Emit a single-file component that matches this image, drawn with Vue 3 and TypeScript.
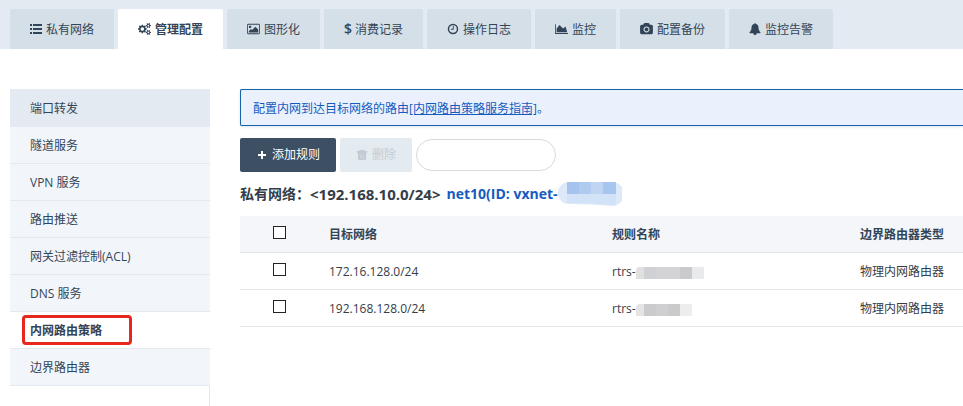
<script setup lang="ts">
import { ref, computed } from 'vue'

interface Tab {
  label: string
  icon: string
}

interface Rule {
  id: number
  target: string
  type: string
  mask: { width: number; blocks: { x: number; w: number; fill: string }[] }
}

const tabs: Tab[] = [
  { label: '私有网络', icon: 'list' },
  { label: '管理配置', icon: 'cogs' },
  { label: '图形化', icon: 'image' },
  { label: '消费记录', icon: 'dollar' },
  { label: '操作日志', icon: 'clock' },
  { label: '监控', icon: 'chart' },
  { label: '配置备份', icon: 'camera' },
  { label: '监控告警', icon: 'bell' },
]
const activeTab = ref(1)

const menu = ['端口转发', '隧道服务', 'VPN 服务', '路由推送', '网关过滤控制(ACL)', 'DNS 服务', '内网路由策略', '边界路由器']
const activeMenu = ref(6)

const rules: Rule[] = [
  {
    id: 1,
    target: '172.16.128.0/24',
    type: '物理内网路由器',
    mask: {
      width: 68,
      blocks: [
        { x: 0, w: 8, fill: '#e0e0e1' },
        { x: 8, w: 12, fill: '#d0d1d4' },
        { x: 20, w: 24, fill: '#d4d4d6' },
        { x: 44, w: 12, fill: '#cacacc' },
        { x: 56, w: 12, fill: '#e9eaec' },
      ],
    },
  },
  {
    id: 2,
    target: '192.168.128.0/24',
    type: '物理内网路由器',
    mask: {
      width: 56,
      blocks: [
        { x: 0, w: 8, fill: '#e4e4e5' },
        { x: 8, w: 12, fill: '#cbcbcd' },
        { x: 20, w: 12, fill: '#cfcfd1' },
        { x: 32, w: 12, fill: '#cacacc' },
        { x: 44, w: 12, fill: '#ededee' },
      ],
    },
  },
]

const selected = ref<number[]>([])
const keyword = ref('')
const allSelected = computed({
  get: () => selected.value.length === rules.length,
  set: (on: boolean) => {
    selected.value = on ? rules.map((r) => r.id) : []
  },
})
</script>

<template>
  <div class="page">
    <nav class="tabs">
      <button
        v-for="(tab, i) in tabs"
        :key="tab.label"
        type="button"
        class="tab"
        :class="{ active: i === activeTab }"
        @click="activeTab = i"
      >
        <svg v-if="tab.icon === 'list'" class="icon" viewBox="0 0 12 12" aria-hidden="true">
          <path d="M0 1h2v2H0zM3 1h9v2H3zM0 5h2v2H0zM3 5h9v2H3zM0 9h2v2H0zM3 9h9v2H3z" />
        </svg>
        <svg v-else-if="tab.icon === 'cogs'" class="icon wide" viewBox="0 0 1920 1792" aria-hidden="true">
          <path
            d="M896 896q0-106-75-181t-181-75-181 75-75 181 75 181 181 75 181-75 75-181zm768 512q0-52-38-90t-90-38-90 38-38 90q0 53 37.5 90.5t90.5 37.5 90.5-37.5 37.5-90.5zm0-1024q0-52-38-90t-90-38-90 38-38 90q0 53 37.5 90.5t90.5 37.5 90.5-37.5 37.5-90.5zm-384 421v185q0 10-7 19.5t-16 10.5l-155 24q-11 35-32 76 34 48 90 115 7 11 7 20 0 12-7 19-23 30-82.5 89.5t-78.5 59.5q-11 0-21-7l-115-90q-37 19-77 31-11 108-23 155-7 24-30 24h-186q-11 0-20-7.5t-10-17.5l-23-153q-34-10-75-31l-118 89q-7 7-20 7-11 0-21-8-144-133-144-160 0-9 7-19 10-14 41-53t47-61q-23-44-35-82l-152-24q-10-1-17-9.5t-7-19.5v-185q0-10 7-19.5t16-10.5l155-24q11-35 32-76-34-48-90-115-7-11-7-20 0-12 7-20 22-30 82-89t79-59q11 0 21 7l115 90q34-18 77-32 11-108 23-154 7-24 30-24h186q11 0 20 7.5t10 17.5l23 153q34 10 75 31l118-89q8-7 20-7 11 0 21 8 144 133 144 160 0 8-7 19-12 16-42 54t-45 60q23 48 34 82l152 23q10 2 17 10.5t7 19.5zm640 533v140q0 16-149 31-12 27-30 52 51 113 51 138 0 4-4 7-122 71-124 71-8 0-46-47t-52-68q-20 2-30 2t-30-2q-14 21-52 68t-46 47q-2 0-124-71-4-3-4-7 0-25 51-138-18-25-30-52-149-15-149-31v-140q0-16 149-31 13-29 30-52-51-113-51-138 0-4 4-7 4-2 35-20t59-34 30-16q8 0 46 46.5t52 67.5q20-2 30-2t30 2q51-71 92-112l6-2q4 0 124 70 4 3 4 7 0 25-51 138 17 23 30 52 149 15 149 31zm0-1024v140q0 16-149 31-12 27-30 52 51 113 51 138 0 4-4 7-122 71-124 71-8 0-46-47t-52-68q-20 2-30 2t-30-2q-14 21-52 68t-46 47q-2 0-124-71-4-3-4-7 0-25 51-138-18-25-30-52-149-15-149-31v-140q0-16 149-31 13-29 30-52-51-113-51-138 0-4 4-7 4-2 35-20t59-34 30-16q8 0 46 46.5t52 67.5q20-2 30-2t30 2q51-71 92-112l6-2q4 0 124 70 4 3 4 7 0 25-51 138 17 23 30 52 149 15 149 31z"
          />
        </svg>
        <svg v-else-if="tab.icon === 'image'" class="icon wide" viewBox="-64 0 1920 1792" aria-hidden="true">
          <path
            d="M576 576q0 80-56 136t-136 56-136-56-56-136 56-136 136-56 136 56 56 136zm1024 384v448h-1408v-192l320-320 160 160 512-512zm96-704h-1600q-13 0-22.5 9.5t-9.5 22.5v1216q0 13 9.5 22.5t22.5 9.5h1600q13 0 22.5-9.5t9.5-22.5v-1216q0-13-9.5-22.5t-22.5-9.5zm160 32v1216q0 66-47 113t-113 47h-1600q-66 0-113-47t-47-113v-1216q0-66 47-113t113-47h1600q66 0 113 47t47 113z"
          />
        </svg>
        <span v-else-if="tab.icon === 'dollar'" class="dollar" aria-hidden="true">$</span>
        <svg v-else-if="tab.icon === 'clock'" class="icon" viewBox="0 0 12 12" aria-hidden="true">
          <circle class="line" cx="6" cy="6" r="4.5" />
          <path class="hand" d="M6.3 3.2v3.1H4" />
        </svg>
        <svg v-else-if="tab.icon === 'chart'" class="icon wide" viewBox="0 0 2048 1792" aria-hidden="true">
          <path d="M2048 1536v128h-2048v-1536h128v1408h1920zm-384-1024l256 896h-1664v-576l448-576 576 576z" />
        </svg>
        <svg v-else-if="tab.icon === 'camera'" class="icon wide" viewBox="0 0 1920 1792" aria-hidden="true">
          <path
            d="M960 672q119 0 203.5 84.5t84.5 203.5-84.5 203.5-203.5 84.5-203.5-84.5-84.5-203.5 84.5-203.5 203.5-84.5zm704-416q106 0 181 75t75 181v896q0 106-75 181t-181 75h-1408q-106 0-181-75t-75-181v-896q0-106 75-181t181-75h224l51-136q19-49 69.5-84.5t103.5-35.5h512q53 0 103.5 35.5t69.5 84.5l51 136h224zm-704 1152q185 0 316.5-131.5t131.5-316.5-131.5-316.5-316.5-131.5-316.5 131.5-131.5 316.5 131.5 316.5 316.5 131.5z"
          />
        </svg>
        <svg v-else class="icon" viewBox="0 0 1792 1792" aria-hidden="true">
          <path
            d="M1728 1408q0 52-38 90t-90 38h-448q0 106-75 181t-181 75-181-75-75-181h-448q-52 0-90-38t-38-90q50-42 91-88t85-119.5 74.5-158.5 50-206 19.5-260q0-152 117-282.5t307-158.5q-8-19-8-39 0-40 28-68t68-28 68 28 28 68q0 20-8 39 190 28 307 158.5t117 282.5q0 139 19.5 260t50 206 74.5 158.5 85 119.5 91 88z"
          />
        </svg>
        <span class="tab-label">{{ tab.label }}</span>
      </button>
    </nav>

    <div class="body">
      <aside class="side">
        <ul class="menu">
          <li v-for="(item, i) in menu" :key="item" :class="{ first: i === 0, current: i === activeMenu }">
            <a href="#" @click.prevent="activeMenu = i">{{ item }}</a>
          </li>
        </ul>
      </aside>

      <main class="main">
        <p class="notice">配置内网到达目标网络的路由<a href="#">[内网路由策略服务指南]</a>。</p>

        <div class="toolbar">
          <button type="button" class="btn primary">
            <svg class="icon" viewBox="0 0 12 12" aria-hidden="true"><path d="M5 2h2v3h3v2H7v3H5V7H2V5h3z" /></svg>
            <span>添加规则</span>
          </button>
          <button type="button" class="btn" disabled>
            <svg class="icon" viewBox="0 0 12 12" aria-hidden="true">
              <path
                fill-rule="evenodd"
                d="M4 1h4l1 1h2v2H1V2h2zM2 4h8v6q0 1-1 1H3q-1 0-1-1zM4.1 5.5v4h.3v-4zM5.8 5.5v4h.3v-4zM7.6 5.5v4h.3v-4z"
              />
            </svg>
            <span>删除</span>
          </button>
          <input v-model="keyword" class="search" type="text" aria-label="搜索" />
        </div>

        <h2 class="title">
          <span>私有网络：</span>
          <span class="range">&lt;192.168.10.0/24&gt;</span>
          <a href="#">net10(ID: vxnet-</a>
          <svg class="id-mask" viewBox="0 0 64 24" aria-hidden="true">
            <path fill="#dde9f8" d="M10 0h44a12 12 0 0 1 0 24Q32 22 12 22A11 11 0 0 1 10 0z" />
            <path fill="#a5c3ee" d="M9 0h12v12H9z" />
            <path fill="#b1caf0" d="M21 0h12v12H21z" />
            <path fill="#c0d4f3" d="M33 0h12v12H33z" />
            <path fill="#a6c5ef" d="M45 0h13v12H45z" />
            <path fill="#d2e3f8" d="M9 12h49v11Q30 21 9 21z" />
          </svg>
        </h2>

        <table class="rules">
          <colgroup>
            <col class="c-check" />
            <col class="c-target" />
            <col class="c-name" />
            <col />
          </colgroup>
          <thead>
            <tr>
              <th><input v-model="allSelected" type="checkbox" aria-label="全选" /></th>
              <th>目标网络</th>
              <th>规则名称</th>
              <th>边界路由器类型</th>
            </tr>
          </thead>
          <tbody>
            <tr v-for="rule in rules" :key="rule.id">
              <td><input v-model="selected" type="checkbox" :value="rule.id" :aria-label="rule.target" /></td>
              <td>{{ rule.target }}</td>
              <td>
                <div class="name">
                  <span>rtrs-</span>
                  <svg class="name-mask" :width="rule.mask.width" height="12" aria-hidden="true">
                    <rect
                      v-for="b in rule.mask.blocks"
                      :key="b.x"
                      :x="b.x"
                      y="0"
                      :width="b.w"
                      height="12"
                      :fill="b.fill"
                    />
                  </svg>
                </div>
              </td>
              <td>{{ rule.type }}</td>
            </tr>
          </tbody>
        </table>
      </main>
    </div>
  </div>
</template>

<style>
body {
  background: #fff;
}
</style>

<style scoped>
.page {
  display: flex;
  flex-direction: column;
  min-height: 100vh;
  overflow: hidden;
  color: #343d48;
  font-family: 'Open Sans', 'Noto Sans CJK SC', sans-serif;
  font-size: 12px;
  line-height: 20px;
}

button,
input {
  margin: 0;
  font: inherit;
  color: inherit;
}

.icon {
  flex: none;
  width: 12px;
  height: 12px;
  fill: currentColor;
}

.icon.wide {
  width: 13px;
}

.icon .line,
.icon .hand {
  fill: none;
  stroke: currentColor;
  stroke-width: 1.5;
}

.icon .hand {
  stroke-width: 1;
}

.tabs {
  display: flex;
  gap: 4px;
  padding: 9px 10px 0;
  background: #e3eaf1;
}

.tab {
  display: flex;
  align-items: center;
  gap: 4px;
  height: 40px;
  padding: 0 20px;
  border: 0;
  border-radius: 2px 2px 0 0;
  background: #d5dfe7;
  color: #324558;
  white-space: nowrap;
}

.tab.active {
  background: #fff;
  font-weight: 700;
}

.tab-label {
  padding-top: 2px;
}

.dollar {
  width: 7px;
  font-size: 14px;
  font-weight: 600;
}

.body {
  display: flex;
  flex: 1;
  gap: 30px;
  padding: 40px 0 0 10px;
}

.side {
  flex: none;
  box-sizing: border-box;
  width: 200px;
  border-right: 1px solid #e3e8ed;
}

.menu {
  margin: 0 -1px 0 0;
  padding: 0;
  list-style: none;
}

.menu li {
  position: relative;
  border-bottom: 1px solid #e3e9ee;
  background: #f2f6fa;
}

.menu a {
  display: block;
  padding: 9px 20px 7px;
  color: #324558;
  text-decoration: none;
}

.menu .first {
  padding-top: 1px;
  background: #e3eaf1;
}

.menu .current {
  background: #fff;
}

.menu .current a {
  font-weight: 700;
}

.menu .current::after {
  content: '';
  position: absolute;
  top: 3px;
  left: 12px;
  box-sizing: border-box;
  width: 110px;
  height: 30px;
  border: 3px solid #e6281f;
  border-radius: 4px;
  pointer-events: none;
}

.main {
  flex: 1;
  min-width: 0;
}

.notice {
  margin: 0;
  padding: 9px 12px 6px;
  border: 1px solid #1763ab;
  border-right: 0;
  border-radius: 2px 0 0 2px;
  background: #eaf1fc;
  box-shadow: 0 1px 3px #dde3ea;
  color: #165bc0;
}

.notice a {
  color: inherit;
}

.toolbar {
  display: flex;
  align-items: center;
  gap: 4px;
  margin-top: 12px;
}

.btn {
  display: flex;
  align-items: center;
  gap: 4px;
  height: 34px;
  padding: 0 16px;
  border: 0;
  border-radius: 2px;
  background: #e3eaf0;
  color: #c3ccd5;
}

.btn.primary {
  background: #3d4f63;
  color: #fff;
}

.search {
  box-sizing: border-box;
  width: 140px;
  height: 32px;
  padding: 0 16px;
  border: 1px solid #d8dbde;
  border-radius: 16px;
  background: #fff;
  outline: 0;
}

.title {
  display: flex;
  align-items: center;
  height: 24px;
  margin: 10px 0;
  font-size: 14px;
  font-weight: 700;
  white-space: nowrap;
}

.title .range {
  font-size: 15px;
}

.title a {
  margin-left: 6px;
  color: #165bc0;
  text-decoration: none;
}

.id-mask {
  flex: none;
  width: 64px;
  height: 24px;
}

.rules {
  width: 100%;
  table-layout: fixed;
  border-collapse: collapse;
}

.c-check {
  width: 79px;
}

.c-target {
  width: 283px;
}

.c-name {
  width: 248px;
}

.rules th,
.rules td {
  height: 34px;
  padding: 2px 10px 0;
  border-bottom: 1px solid #e1e6eb;
  text-align: left;
  white-space: nowrap;
}

.rules th {
  background: #f4f6fa;
  color: #324558;
}

.rules input {
  appearance: none;
  display: block;
  box-sizing: border-box;
  width: 13px;
  height: 13px;
  margin: 0 auto 6px;
  border: 1px solid #222;
  background: #fff;
}

.rules input:checked {
  background: #3d4f63;
}

.name {
  display: flex;
  align-items: center;
}

.name-mask {
  margin-top: 2px;
  border-radius: 4px 0 0 0;
}
</style>
